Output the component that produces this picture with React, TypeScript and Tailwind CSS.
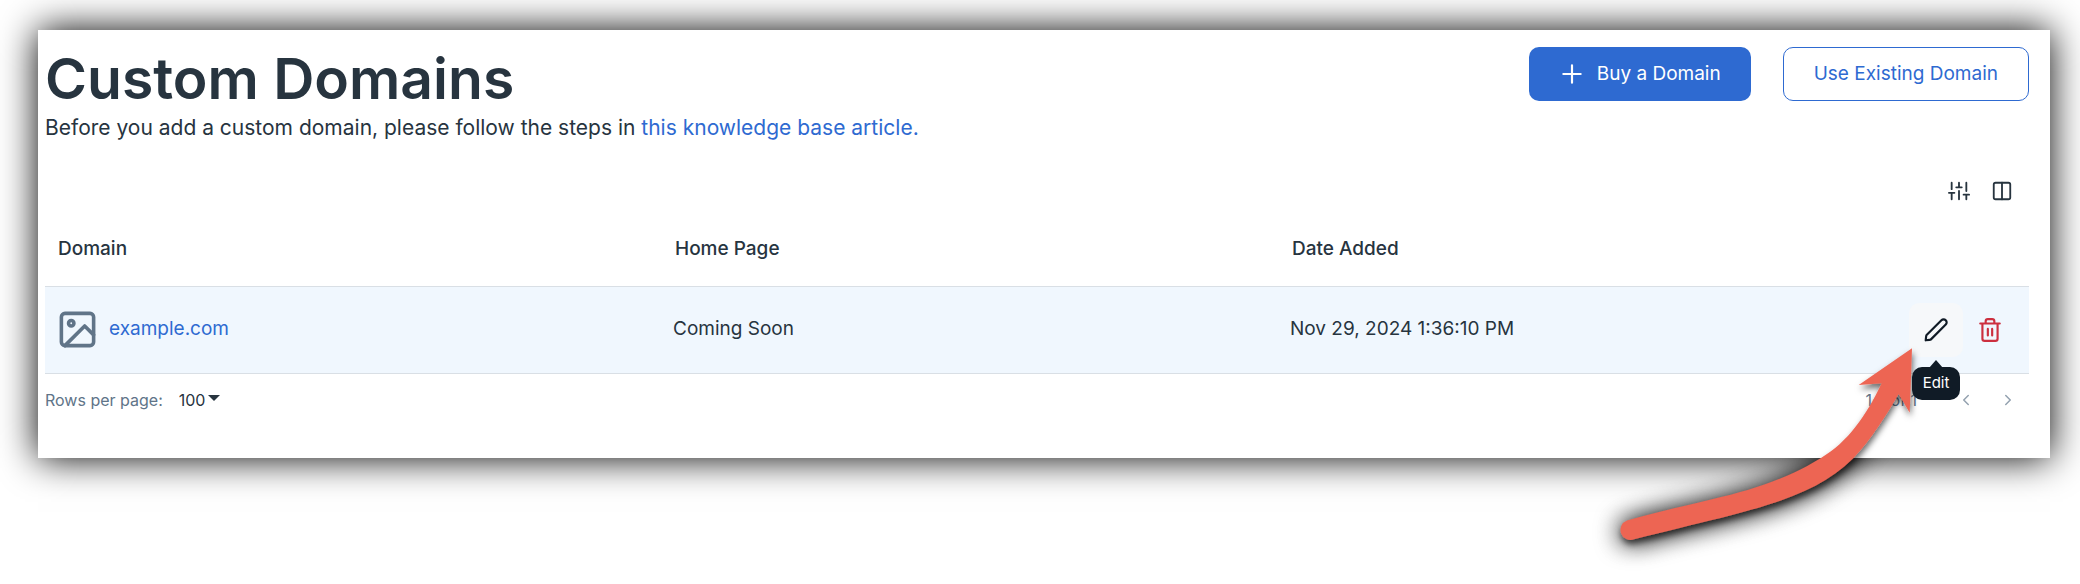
import React from "react";

type IconProps = { size: number; children: React.ReactNode };

function Icon({ size, children }: IconProps) {
  return (
    <svg
      width={size}
      height={size}
      viewBox="0 0 24 24"
      fill="none"
      stroke="currentColor"
      strokeWidth={2}
      strokeLinecap="round"
      strokeLinejoin="round"
      aria-hidden="true"
      className="shrink-0"
    >
      {children}
    </svg>
  );
}

const arrowShape =
  "M37 190.5 C120 167 170 165 231 128 C258 112 276 86 291.7 53.3 L268.7 55 L322 18.3 L319.7 82.7 L308.7 64 C297 84 281 110 263 128.5 C220 172 150 182 44 209.3 A10 10 0 0 1 37 190.5 Z";

/* Wide halo, painted behind the panel. */
function ArrowHalo() {
  return (
    <svg
      width="360"
      height="254"
      viewBox="0 0 360 254"
      aria-hidden="true"
      className="pointer-events-none absolute right-[100px] -bottom-[126px] overflow-visible"
    >
      <defs>
        <filter id="halo" x="-20%" y="-40%" width="140%" height="180%">
          <feGaussianBlur stdDeviation="13" />
        </filter>
      </defs>
      <path d={arrowShape} transform="translate(0 2)" fill="#000" filter="url(#halo)" />
      <path d={arrowShape} transform="translate(0 2)" fill="#000" opacity="0.4" filter="url(#halo)" />
    </svg>
  );
}

function Arrow() {
  return (
    <svg
      width="360"
      height="254"
      viewBox="0 0 360 254"
      aria-hidden="true"
      className="pointer-events-none absolute right-[100px] -bottom-[126px] overflow-visible"
    >
      <defs>
        <filter id="drop" x="-20%" y="-20%" width="140%" height="150%">
          <feDropShadow dx="1" dy="4" stdDeviation="3" floodColor="#000" floodOpacity="0.6" />
        </filter>
      </defs>
      <path d={arrowShape} fill="#ed6553" filter="url(#drop)" />
    </svg>
  );
}

export default function App() {
  return (
    <div className="overflow-hidden bg-white pt-[30px] pr-[30px] pb-[126px] pl-[38px] font-['Inter',sans-serif] text-[#27343f]">
      <div className="relative">
        <div className="absolute inset-0 shadow-[0_0_36px_rgba(0,0,0,1)]" />
        <ArrowHalo />
        <main className="relative bg-white pt-[17px] pr-[21px] pb-8 pl-[7px]">
          <header className="flex items-start justify-between">
            <div>
              <h1 className="text-[57px] leading-[64px] font-semibold">Custom Domains</h1>
              <p className="text-[21px] leading-[34px]">
                Before you add a custom domain, please follow the steps in{" "}
                <a href="#" className="text-[#2e6ad1]">
                  this knowledge base article.
                </a>
              </p>
            </div>
            <div className="flex gap-8">
              <button className="flex h-[54px] items-center gap-3 rounded-[10px] bg-[#2e6ad1] px-[30px] text-[19px] text-white">
                <Icon size={26}>
                  <path d="M12 4v16M4 12h16" />
                </Icon>
                Buy a Domain
              </button>
              <button className="h-[54px] rounded-[10px] border border-[#2e6ad1] px-[30px] text-[19px] text-[#2e6ad1]">
                Use Existing Domain
              </button>
            </div>
          </header>

          <div className="mt-[26px] mb-px flex h-10 justify-end pr-[6px]">
            <button aria-label="Filters" className="flex w-[43px] items-center justify-center">
              <Icon size={22}>
                <path d="M4 21v-7M4 10V3M12 21v-9M12 8V3M20 21v-5M20 12V3M1 14h6M9 8h6M17 16h6" />
              </Icon>
            </button>
            <button aria-label="Columns" className="flex w-[43px] items-center justify-center">
              <Icon size={22}>
                <rect x="3" y="3" width="18" height="18" rx="2" />
                <path d="M12 3v18" />
              </Icon>
            </button>
          </div>

          <table className="w-full table-fixed border-collapse text-left text-[19px]">
            <thead>
              <tr className="h-[74px]">
                <th className="px-[13px] font-medium">Domain</th>
                <th className="px-[13px] font-medium">Home Page</th>
                <th className="px-[13px] font-medium">Date Added</th>
                <th className="w-[133px]" aria-label="Actions" />
              </tr>
            </thead>
            <tbody>
              <tr className="h-[87px] border-y border-[#d9dfe5] bg-[#f0f7fe]">
                <td className="px-[11px]">
                  <div className="flex items-center gap-[10px]">
                    <span className="flex text-[#607488]">
                      <Icon size={43}>
                        <rect x="3" y="3" width="18" height="18" rx="2" />
                        <circle cx="8.5" cy="8.5" r="1.5" />
                        <path d="M21 15l-5-5L5 21" />
                      </Icon>
                    </span>
                    <a href="#" className="text-[#2e6ad1]">
                      example.com
                    </a>
                  </div>
                </td>
                <td className="px-[11px]">Coming Soon</td>
                <td className="px-[11px]">Nov 29, 2024 1:36:10 PM</td>
                <td className="pr-3">
                  <div className="flex justify-end">
                    <div className="relative">
                      <button
                        aria-label="Edit"
                        aria-describedby="edit-tip"
                        className="flex size-[54px] items-center justify-center rounded-[10px] bg-[#f6f8fa] text-[#101b26]"
                      >
                        <Icon size={26}>
                          <path d="M2.876 18.116c.046-.414.069-.62.131-.814.056-.171.134-.334.234-.485.111-.17.259-.317.553-.611L17 3c1.105-1.105 2.895-1.105 4 0s1.105 2.895 0 4L7.794 20.206c-.294.295-.441.442-.611.553-.15.1-.314.178-.485.234-.193.062-.4.085-.814.131L2.5 21.5z" />
                        </Icon>
                      </button>
                      <div
                        id="edit-tip"
                        role="tooltip"
                        className="absolute top-[64px] left-[3px] z-10 flex h-[33px] w-12 items-center justify-center rounded-[10px] bg-[#101b26] text-[15px] text-white"
                      >
                        <svg width="14" height="8" viewBox="0 0 14 8" aria-hidden="true" className="absolute -top-[7px] left-[17px]">
                          <path d="M0 8 7 0l7 8z" fill="#101b26" />
                        </svg>
                        Edit
                      </div>
                    </div>
                    <button aria-label="Delete" className="flex size-[54px] items-center justify-center text-[#cc2f3f]">
                      <Icon size={26}>
                        <path d="M3 6h18M19 6v14a2 2 0 0 1-2 2H7a2 2 0 0 1-2-2V6M8 6V4a2 2 0 0 1 2-2h4a2 2 0 0 1 2 2v2M10 11v6M14 11v6" />
                      </Icon>
                    </button>
                  </div>
                </td>
              </tr>
            </tbody>
          </table>

          <footer className="flex h-[52px] items-center justify-between text-[16px] text-[#607488]">
            <div className="flex items-center gap-4">
              <label htmlFor="rows">Rows per page:</label>
              <div className="relative flex items-center">
                <select id="rows" defaultValue="100" className="appearance-none bg-transparent pr-[14px] text-[#27343f]">
                  <option>100</option>
                </select>
                <svg width="12" height="6" viewBox="0 0 12 6" aria-hidden="true" className="pointer-events-none absolute top-[7px] right-0">
                  <path d="M0 0h12L6 6z" fill="#27343f" />
                </svg>
              </div>
            </div>
            <div className="flex items-center">
              <span className="mr-7">1-1 of 1</span>
              <button aria-label="Previous page" className="flex h-10 w-[42px] items-center justify-center text-[#93a1af]">
                <Icon size={18}>
                  <path d="M15 18l-6-6 6-6" />
                </Icon>
              </button>
              <button aria-label="Next page" className="flex h-10 w-[42px] items-center justify-center text-[#93a1af]">
                <Icon size={18}>
                  <path d="M9 18l6-6-6-6" />
                </Icon>
              </button>
            </div>
          </footer>
        </main>
        <Arrow />
      </div>
    </div>
  );
}
